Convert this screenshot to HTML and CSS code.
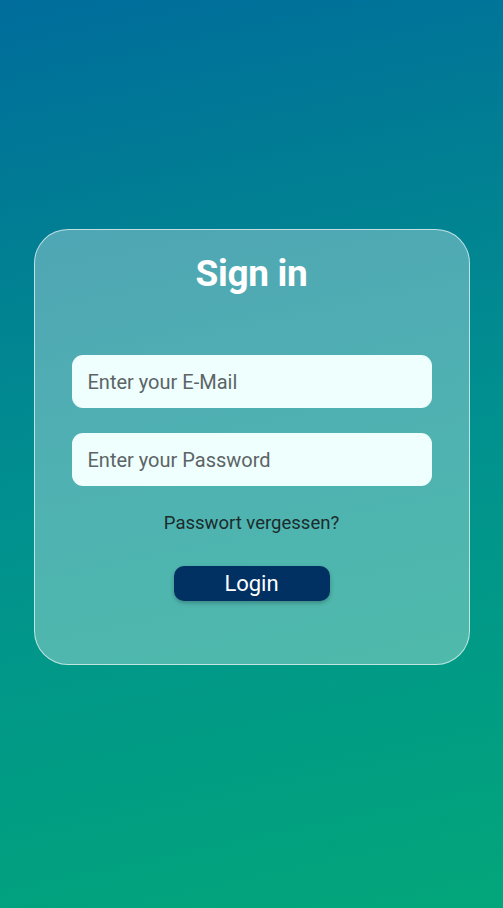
FILE: index.html
```html
<!DOCTYPE html>
<html lang="de">
<head>
<meta charset="utf-8">
<title>Sign in</title>
<link rel="stylesheet" href="styles.css">
</head>
<body>
<main class="page">
  <form class="card">
    <h1 class="title">Sign in</h1>
    <input class="field field-first" type="email" placeholder="Enter your E-Mail">
    <input class="field" type="password" placeholder="Enter your Password">
    <a class="forgot" href="#">Passwort vergessen?</a>
    <button class="login" type="button">Login</button>
  </form>
</main>
</body>
</html>
```
FILE: styles.css
```css
html, body {
  margin: 0;
  padding: 0;
  height: 100%;
}
body {
  font-family: Roboto, "Noto Sans", sans-serif;
  background: linear-gradient(168deg, #006d9c 0%, #017f93 25%, #01918f 52%, #019c84 78%, #03a67a 100%);
  min-height: 908px;
}
.page {
  height: 908px;
  display: flex;
  justify-content: center;
  padding-top: 229px;
  box-sizing: border-box;
}
.card {
  width: 436px;
  height: 436px;
  box-sizing: border-box;
  border: 1px solid rgba(255, 255, 255, 0.65);
  border-radius: 34px;
  background: rgba(255, 255, 255, 0.31);
  display: flex;
  flex-direction: column;
  align-items: center;
  padding: 21px 37px 0;
}
.title {
  margin: 0;
  color: #ffffff;
  font-size: 37px;
  font-weight: 700;
  line-height: 46px;
  letter-spacing: -0.3px;
}
.field {
  width: 360px;
  height: 53px;
  box-sizing: border-box;
  border: none;
  border-radius: 11px;
  background: #eefffe;
  padding: 0 16px;
  font-family: Roboto, "Noto Sans", sans-serif;
  font-size: 20px;
  color: #333;
  margin-top: 25px;
  outline: none;
}
.field-first {
  margin-top: 58px;
}
.field::placeholder {
  color: #5d6466;
}
.forgot {
  margin-top: 25px;
  font-size: 18.5px;
  line-height: 24px;
  color: #1b2b2c;
  text-decoration: none;
}
.login {
  margin-top: 31px;
  width: 156px;
  height: 35px;
  border: none;
  border-radius: 10px;
  background: #013163;
  color: #ffffff;
  font-family: Roboto, "Noto Sans", sans-serif;
  font-size: 22px;
  font-weight: 400;
  padding: 0;
  box-shadow: 0 2px 4px rgba(0, 0, 0, 0.25);
  cursor: pointer;
}
```
